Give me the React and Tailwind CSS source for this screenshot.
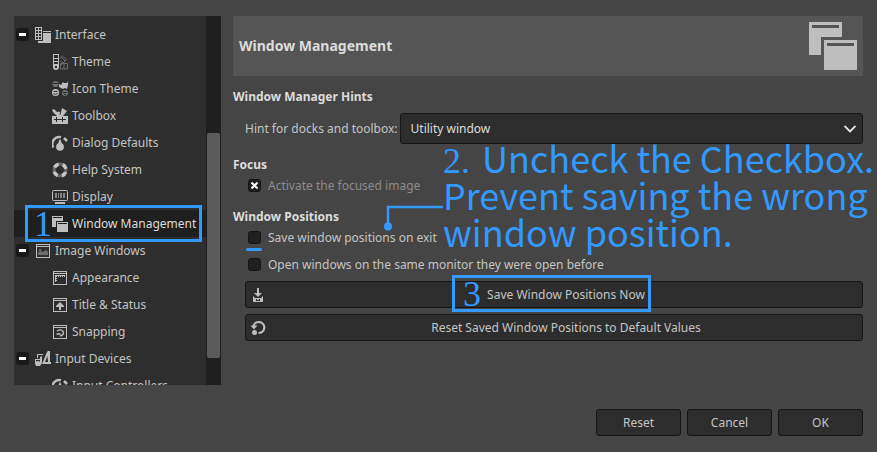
import React from "react";

const Icon = ({ children, size = 16 }) => (
  <svg width={size} height={size} viewBox="0 0 16 16" fill="#bebebe" className="block shrink-0" aria-hidden="true">
    {children}
  </svg>
);

const InterfaceIcon = () => (
  <Icon>
    <path d="M0 0h7v13H0z" />
    <path fill="#2e2e2e" d="M1 1h2v2H1zM4 1h2v2H4zM1 4h2v2H1zM4 4h2v2H4zM1 7h2v2H1zM4 7h2v2H4zM1 10h2v2H1zM4 10h2v2H4z" />
    <path d="M8 4h8v1H8zM8 6h8v10H3v-2h5z" />
  </Icon>
);

const ThemeIcon = () => (
  <Icon>
    <g fill="none" stroke="#6c6c6c">
      <path d="M7.500 4.500l3-2.500 4 3.500-6 6M8 7l3 2M9.500 3l3.500 4M8.500 9.500h7v5.500h-7zM12 9.500V15" />
    </g>
    <path d="M1 0h6v13a3 3 0 0 1-6 0z" />
    <path fill="#2e2e2e" d="M2 1h4v3H2zM2 5h4v2H2zM2 8h4v2H2zM3 12h2v2H3z" />
  </Icon>
);

const IconThemeIcon = () => (
  <Icon>
    <circle cx="3.500" cy="3" r="3" fill="#707070" />
    <path d="M1 2.500h5" stroke="#2e2e2e" />
    <path d="M7 3l2 1 2-3 1 1h3l1-2v4l-1 4-2-1-2 1-2-1-2-1z" />
    <circle cx="3.500" cy="11.500" r="3.500" />
    <path d="M1.500 10.500h4M1.500 12.500q2 2 4 0" stroke="#2e2e2e" fill="none" />
    <circle cx="13" cy="12" r="3" fill="#707070" />
    <path d="M11 11.500h4M12 13.500h2" stroke="#2e2e2e" />
  </Icon>
);

const ToolboxIcon = () => (
  <Icon>
    <path d="M0 8h16v8H0z" />
    <path d="M0 2l2-1 2 2 4 4v1H5L1 4z" />
    <path d="M10 0l5 3-4 5H8z" />
    <circle cx="6.500" cy="5" r="1.500" />
    <path fill="#2e2e2e" d="M2 11h2V9h1v2h5V9h1v2h3v1h-3v2h-1v-2H5v2H4v-2H2z" />
  </Icon>
);

const DialIcon = () => (
  <Icon>
    <path d="M1.300 12.500A7 7 0 0 1 9 2.200" fill="none" stroke="#bebebe" strokeWidth="2.400" />
    <path d="M12 3l3 3" stroke="#bebebe" strokeWidth="2.600" />
    <circle cx="8" cy="11.800" r="3.900" />
    <path d="M6 9l1.500-4.500h1L10 9z" />
  </Icon>
);

const HelpIcon = () => (
  <Icon>
    <circle cx="8" cy="8" r="6" fill="none" stroke="#6a6a6a" strokeWidth="3" />
    <circle cx="8" cy="8" r="6" fill="none" stroke="#c6c6c6" strokeWidth="3.600" strokeDasharray="5 4.425" strokeDashoffset="-2.200" />
  </Icon>
);

const DisplayIcon = () => (
  <Icon>
    <rect x="0.500" y="1.500" width="15" height="10" rx="1" fill="none" stroke="#bebebe" />
    <path fill="#858585" d="M3 4h2v5H3zM6 4h1v5H6zM8 4h2v5H8zM11 4h2v5h-2z" />
    <path d="M3 13h10v2H3z" />
  </Icon>
);

const WindowsIcon = ({ size = 16, cut = "#1f1f1f" }) => (
  <Icon size={size}>
    <path d="M0 0h11v5H4v6H0z" />
    <path fill={cut} d="M1 1h9v1H1z" />
    <path d="M5 6h11v10H5z" />
    <path fill={cut} d="M6 7h9v1H6z" />
  </Icon>
);

const Frame = ({ children }) => (
  <Icon>
    <path fillRule="evenodd" d="M1 1h14v14H1zM2 2v1h12V2zM2 4v10h12V4z" />
    {children}
  </Icon>
);

const ImageWindowsIcon = () => (
  <Frame>
    <path fill="#6c6c6c" d="M3 12V9l3-1 2 1 3-2 2 2v3zM4 6h2v2H4z" />
  </Frame>
);
const AppearanceIcon = () => (
  <Frame>
    <path d="M3 5h10v2h-1V6h-1v1h-1V6H9v1H8V6H7v1H6V6H5v1H4v1h1v1H4v1h1v1H4v1H3z" />
  </Frame>
);
const TitleIcon = () => (
  <Frame>
    <path d="M8 5l4 4v1H9v3H7v-3H4V9z" />
  </Frame>
);
const SnappingIcon = () => (
  <Frame>
    <path d="M5 7q4-2.500 6 0.500t-3 4.500M4.500 10h4" fill="none" stroke="#bebebe" strokeWidth="1.400" />
  </Frame>
);
const InputIcon = () => (
  <Icon>
    <path fillRule="evenodd" d="M13 0h2v11h1v2H7l5-12zM12.500 5L10 11h3z" />
    <path d="M2 3h6v1H3v3H2z" />
    <path fillRule="evenodd" d="M0 8h5V6l2-1v7l-2 3H1l-1-3zM1 9v2h4V9z" />
    <circle cx="3" cy="12.500" r="2.500" />
  </Icon>
);

const SaveIcon = () => (
  <Icon>
    <path d="M7 1h2v5h3L8 10 4 6h3z" />
    <path fillRule="evenodd" d="M3 9l2 2h6l2-2v6H3zM6 12v2h4v-2z" />
    <path d="M7 12h2v1H7z" />
  </Icon>
);

const ResetIcon = () => (
  <Icon>
    <path d="M3.500 6A5.500 5.500 0 1 1 8.500 13" fill="none" stroke="#bebebe" strokeWidth="2.200" />
    <path d="M0.500 5.500h7L4 9.500z" />
    <circle cx="4.500" cy="12.500" r="2.500" />
  </Icon>
);

const tree = [
  { label: "Interface", icon: <InterfaceIcon />, group: true },
  { label: "Theme", icon: <ThemeIcon /> },
  { label: "Icon Theme", icon: <IconThemeIcon /> },
  { label: "Toolbox", icon: <ToolboxIcon /> },
  { label: "Dialog Defaults", icon: <DialIcon /> },
  { label: "Help System", icon: <HelpIcon /> },
  { label: "Display", icon: <DisplayIcon /> },
  { label: "Window Management", icon: <WindowsIcon />, selected: true },
  { label: "Image Windows", icon: <ImageWindowsIcon />, group: true },
  { label: "Appearance", icon: <AppearanceIcon /> },
  { label: "Title & Status", icon: <TitleIcon /> },
  { label: "Snapping", icon: <SnappingIcon /> },
  { label: "Input Devices", icon: <InputIcon />, group: true },
  { label: "Input Controllers", icon: <DialIcon /> },
];

function TreeRow({ label, icon, group, selected }) {
  return (
    <li className={"relative flex h-[27px] items-center " + (selected ? "bg-[#1f1f1f] text-[#dcdcdc]" : "")}>
      {group && (
        <button type="button" aria-label={"Collapse " + label} className="ml-0.5 flex size-[13px] items-center justify-center rounded-[3px] bg-[#191919]">
          <span className="h-[3px] w-[7px] bg-white" />
        </button>
      )}
      <button type="button" className={"flex items-center gap-1 whitespace-nowrap " + (group ? "ml-1.5" : "ml-[38px]")}>
        {icon}
        {label}
      </button>
      {selected && (
        <span className="pointer-events-none absolute -top-[5px] left-[11px] z-10 flex h-[37px] w-[177px] items-center border-3 border-[#3399ff] pl-1.5 font-['Liberation_Serif',serif] text-[36px] leading-none text-[#3399ff]">
          1
        </span>
      )}
    </li>
  );
}

function Check({ label, checked, disabled, underlined }) {
  return (
    <label className={"relative flex h-[27px] items-center gap-[7px] pl-[15px] " + (disabled ? "text-[#8c8c8c]" : "")}>
      <span className="relative flex size-[13px] items-center justify-center">
        <input
          type="checkbox"
          defaultChecked={checked}
          disabled={disabled}
          className="peer size-[13px] appearance-none rounded-[3px] border border-[#151515] bg-[#202020]"
        />
        <svg viewBox="0 0 7 7" className="pointer-events-none absolute hidden size-[7px] peer-checked:block" aria-hidden="true">
          <path d="M0.500 0.500l6 6M6.500 0.500l-6 6" stroke="#fff" strokeWidth="2" />
        </svg>
      </span>
      {label}
      {underlined && <span className="absolute top-[24px] left-[13px] h-[3px] w-4 rounded-full bg-[#3399ff]" />}
    </label>
  );
}

const buttonStyle = "h-[27px] rounded-[3px] border border-[#151515] bg-[#2d2d2d] ";

function WideButton({ icon, children }) {
  return (
    <button type="button" className={buttonStyle + "flex w-full items-center gap-1 pl-1"}>
      {icon}
      <span className="flex-1 text-center">{children}</span>
    </button>
  );
}

export default function App() {
  return (
    <div className="flex h-screen flex-col bg-[#454545] px-3.5 py-4 font-['Noto_Sans',sans-serif] text-[12px] leading-[18px] text-[#c4c4c4]">
      <div className="flex min-h-0 flex-1 gap-3">
        <nav className="flex w-[207px] shrink-0 overflow-hidden bg-[#2e2e2e]">
          <ul className="min-w-0 flex-1 pt-[5px]">
            {tree.map((row) => (
              <TreeRow key={row.label} {...row} />
            ))}
          </ul>
          <div className="w-[15px] bg-[#1f1f1f] px-px pt-[117px]">
            <div className="h-[225px] rounded-xs bg-[#5a5a5a]" />
          </div>
        </nav>

        <main className="min-w-0 flex-1">
          <header className="flex h-[60px] items-center justify-between bg-[#555555] px-1.5">
            <h1 className="text-[14px] font-bold text-[#dcdcdc]">Window Management</h1>
            <WindowsIcon size={48} cut="#555555" />
          </header>

          <h2 className="mt-3 font-bold text-[#dcdcdc]">Window Manager Hints</h2>
          <div className="mt-[7px] flex items-center gap-0.5 pl-3">
            <label htmlFor="hint" className="shrink-0">Hint for docks and toolbox:</label>
            <div className="relative min-w-0 flex-1">
              <select id="hint" className="block h-[31px] w-full appearance-none rounded-[3px] border border-[#151515] bg-[#2d2d2d] pl-2.5 text-[#dcdcdc]">
                <option>Utility window</option>
              </select>
              <svg viewBox="0 0 12 8" className="pointer-events-none absolute top-3 right-[7px] h-2 w-3" fill="none" stroke="#e6e6e6" strokeWidth="1.800" aria-hidden="true">
                <path d="M0.500 1L6 6.500 11.500 1" />
              </svg>
            </div>
          </div>

          <h2 className="mt-3 font-bold text-[#dcdcdc]">Focus</h2>
          <div className="-mt-0.5">
            <Check label="Activate the focused image" checked disabled />
          </div>

          <section className="relative mt-[9px]">
            <h2 className="font-bold text-[#dcdcdc]">Window Positions</h2>
            <div className="-mt-0.5">
              <Check label="Save window positions on exit" underlined />
              <Check label="Open windows on the same monitor they were open before" />
            </div>
            <div className="mt-[3px] flex flex-col gap-1.5 pl-3">
              <div className="relative">
                <WideButton icon={<SaveIcon />}>Save Window Positions Now</WideButton>
                <span className="pointer-events-none absolute -top-[6px] left-[207px] flex h-[37px] w-[199px] items-center border-3 border-[#3399ff] pl-2 font-['Liberation_Serif',serif] text-[36px] leading-none text-[#3399ff]">
                  3
                </span>
              </div>
              <WideButton icon={<ResetIcon />}>Reset Saved Window Positions to Default Values</WideButton>
            </div>

            <svg viewBox="0 0 64 28" className="pointer-events-none absolute -top-1 left-[151px] h-7 w-16" fill="none" aria-hidden="true">
              <path d="M59 3H4V20" stroke="#3399ff" strokeWidth="2.500" />
              <circle cx="4" cy="22.500" r="4" fill="#3399ff" />
            </svg>
            <p className="pointer-events-none absolute -top-[69px] left-[210px] font-['Noto_Sans_CJK_SC',sans-serif] text-[36px] leading-[37px] whitespace-nowrap text-[#3399ff]">
              <span className="mr-1 font-['Liberation_Serif',serif] leading-[20px]">2.</span> Uncheck the Checkbox.
              <br />
              Prevent saving the wrong
              <br />
              window position.
            </p>
          </section>
        </main>
      </div>

      <footer className="mt-6 flex justify-end gap-1.5">
        <button type="button" className={buttonStyle + "w-[85px]"}>Reset</button>
        <button type="button" className={buttonStyle + "w-[85px]"}>Cancel</button>
        <button type="button" className={buttonStyle + "w-[85px]"}>OK</button>
      </footer>
    </div>
  );
}
